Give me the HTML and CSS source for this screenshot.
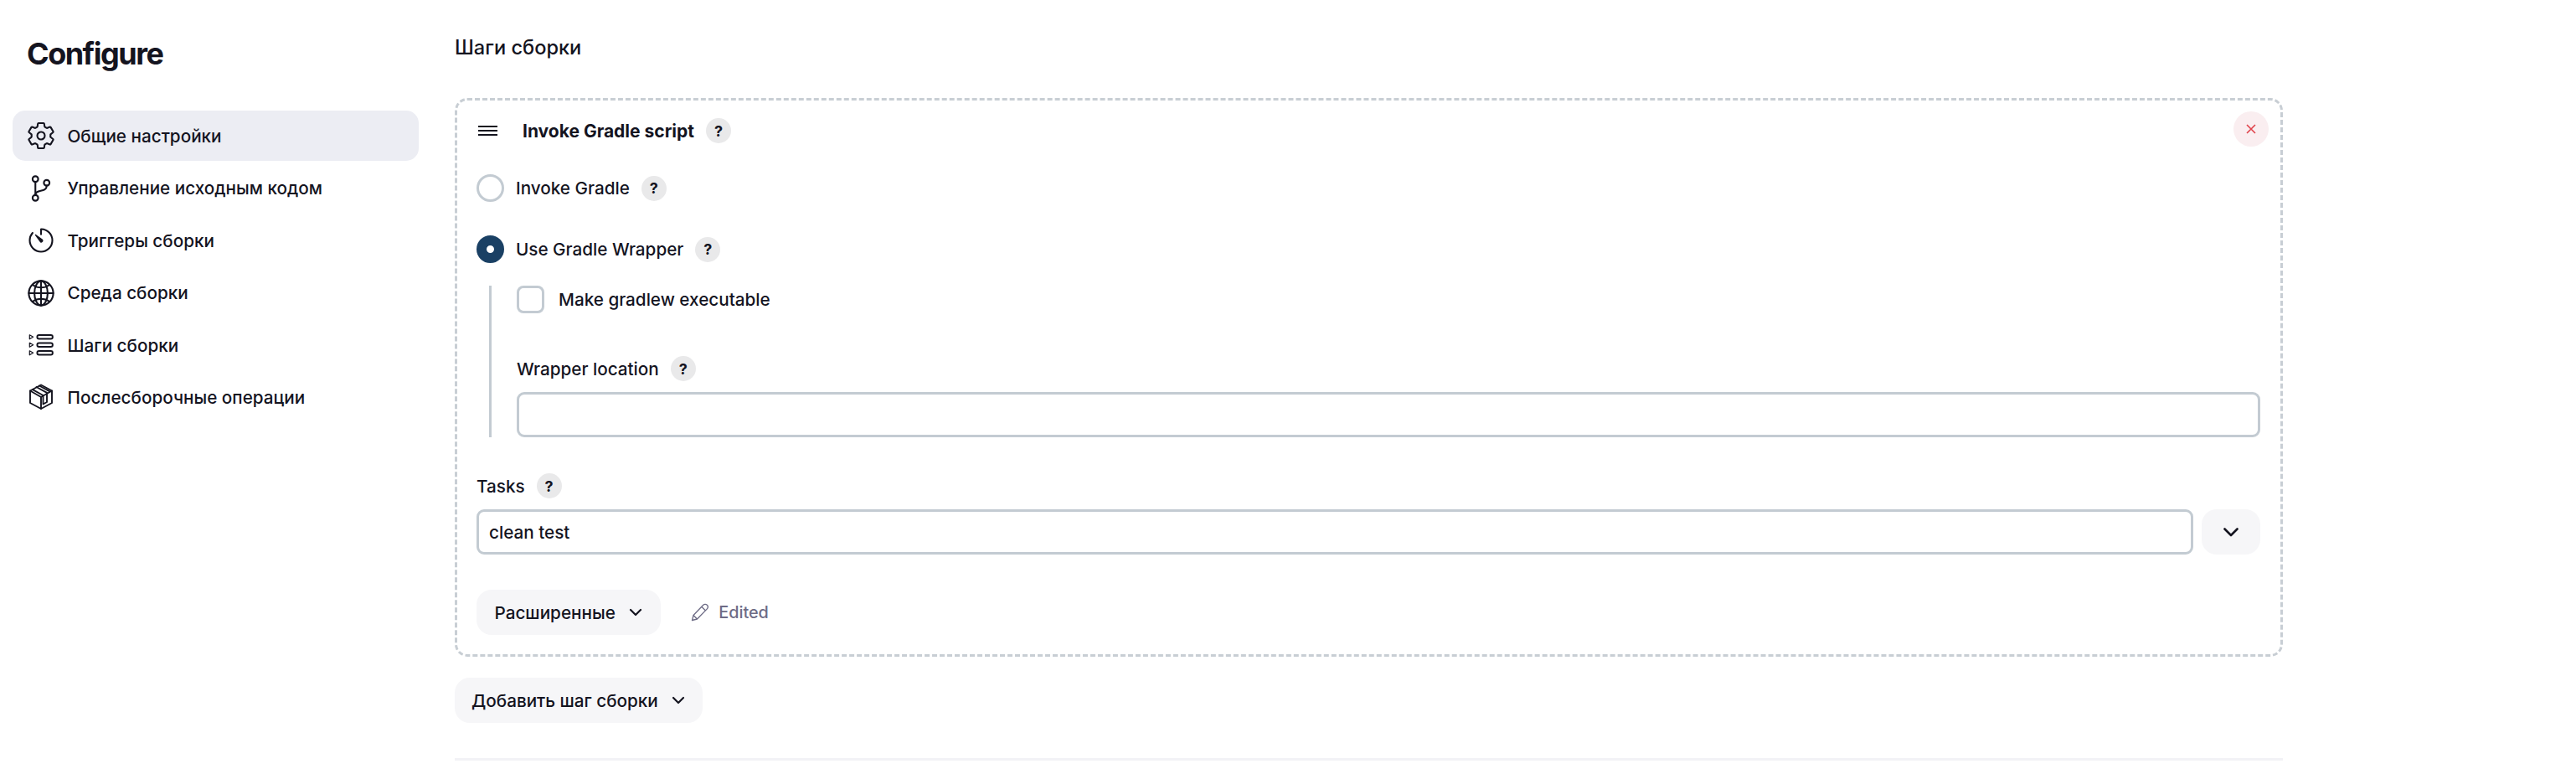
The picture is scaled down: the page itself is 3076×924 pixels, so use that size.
FILE: index.html
```html
<!DOCTYPE html>
<html lang="en">
<head>
    <meta charset="UTF-8">
    <title>Configure</title>
    <link rel="stylesheet" href="styles.css">
</head>
<body>
    <div class="page">
        <aside class="sidebar">
            <h1>Configure</h1>
            <nav class="side-nav">
                <a class="side-item active">
                    <svg class="side-icon" viewBox="0 0 512 512"><path d="M262.29 192.31a64 64 0 1057.4 57.4 64.13 64.13 0 00-57.4-57.4zM416.39 256a154.34 154.34 0 01-1.53 20.79l45.21 35.46a10.81 10.81 0 012.45 13.75l-42.77 74a10.81 10.81 0 01-13.14 4.59l-44.9-18.08a16.11 16.11 0 00-15.17 1.75A164.48 164.48 0 01325 400.8a15.94 15.94 0 00-8.82 12.14l-6.73 47.89a11.08 11.08 0 01-10.68 9.17h-85.54a11.11 11.11 0 01-10.69-8.87l-6.72-47.82a16.07 16.07 0 00-9-12.22 155.3 155.3 0 01-21.46-12.57 16 16 0 00-15.11-1.71l-44.89 18.07a10.81 10.81 0 01-13.14-4.58l-42.77-74a10.8 10.8 0 012.45-13.75l38.21-30a16.05 16.05 0 006-14.08c-.36-4.17-.58-8.33-.58-12.5s.21-8.27.58-12.35a16 16 0 00-6.07-13.94l-38.19-30A10.81 10.81 0 0149.48 186l42.77-74a10.81 10.81 0 0113.14-4.59l44.9 18.08a16.11 16.11 0 0015.17-1.75A164.48 164.48 0 01187 111.2a15.94 15.94 0 008.82-12.14l6.73-47.89A11.08 11.08 0 01213.23 42h85.54a11.11 11.11 0 0110.69 8.87l6.72 47.82a16.07 16.07 0 009 12.22 155.3 155.3 0 0121.46 12.57 16 16 0 0015.11 1.71l44.89-18.07a10.81 10.81 0 0113.14 4.58l42.77 74a10.8 10.8 0 01-2.45 13.75l-38.21 30a16.05 16.05 0 00-6.05 14.08c.33 4.14.55 8.3.55 12.47z"/></svg>
                    <span>Общие настройки</span>
                </a>
                <a class="side-item">
                    <svg class="side-icon" viewBox="0 0 512 512"><circle cx="160" cy="96" r="48"/><circle cx="160" cy="416" r="48"/><path d="M160 368V144"/><circle cx="352" cy="160" r="48"/><path d="M352 208c0 128-192 48-192 160"/></svg>
                    <span>Управление исходным кодом</span>
                </a>
                <a class="side-item">
                    <svg class="side-icon" viewBox="0 0 512 512"><path d="M112.91 128A191.85 191.85 0 0064 254c-1.18 106.35 85.65 193.8 192 194 106.2.2 192-85.83 192-192 0-104.54-83.55-189.61-187.5-192a4.36 4.36 0 00-4.5 4.37V152"/><path class="solid" d="M233.38 278.63l-79-113a8.13 8.13 0 0111.32-11.32l113 79a32.5 32.5 0 01-37.25 53.26 33.21 33.21 0 01-8.07-7.94z"/></svg>
                    <span>Триггеры сборки</span>
                </a>
                <a class="side-item">
                    <svg class="side-icon" viewBox="0 0 512 512"><path d="M256 48C141.13 48 48 141.13 48 256s93.13 208 208 208 208-93.13 208-208S370.87 48 256 48z"/><path d="M256 48c-58.07 0-112.67 93.31-112.67 208S197.93 464 256 464s112.67-93.31 112.67-208S314.07 48 256 48z"/><path d="M117.33 117.33c38.24 27.15 86.38 43.34 138.67 43.34s100.43-16.19 138.67-43.34M394.67 394.67c-38.24-27.15-86.38-43.34-138.67-43.34s-100.43 16.19-138.67 43.34"/><path d="M256 48v416M464 256H48"/></svg>
                    <span>Среда сборки</span>
                </a>
                <a class="side-item">
                    <svg class="side-icon thin" viewBox="0 0 36 36"><rect x="13.400" y="6" width="18.500" height="4.500" rx="2.250"/><rect x="13.400" y="15.500" width="18.500" height="4.500" rx="2.250"/><rect x="13.400" y="25" width="18.500" height="4.500" rx="2.250"/><path class="tick" d="M4.300 5.800l4.300 2.500-4.300 2.500zM4.300 15.300l4.300 2.500-4.300 2.500zM4.300 24.800l4.300 2.500-4.300 2.500z"/></svg>
                    <span>Шаги сборки</span>
                </a>
                <a class="side-item">
                    <svg class="side-icon thin" viewBox="0 0 36 36"><path d="M18 2.500l13 7v14.500l-13 7-13-7V9.500z"/><path d="M5 9.500L18 17l13-7.500M18 17v14"/><path d="M12.500 5L25 11.800V23l-4.500 2.500V15L8 8.200M16 3.500l12.500 6.800"/></svg>
                    <span>Послесборочные операции</span>
                </a>
            </nav>
        </aside>

        <main class="content">
            <h2 class="section-title">Шаги сборки</h2>

            <div class="step-card">
                <button class="close-btn" type="button">
                    <svg viewBox="0 0 12 12"><path d="M1 1l10 10M11 1L1 11"/></svg>
                </button>
                <div class="step-head">
                    <svg class="handle" viewBox="0 0 23 12"><path d="M0 1h23M0 6h23M0 11h23"/></svg>
                    <span class="step-title">Invoke Gradle script</span>
                    <span class="help">?</span>
                </div>

                <label class="radio-row first">
                    <span class="radio"></span>
                    <span>Invoke Gradle</span>
                    <span class="help">?</span>
                </label>
                <label class="radio-row second">
                    <span class="radio checked"></span>
                    <span>Use Gradle Wrapper</span>
                    <span class="help">?</span>
                </label>

                <div class="nested">
                    <label class="check-row">
                        <span class="checkbox"></span>
                        <span>Make gradlew executable</span>
                    </label>
                    <div class="field-label wrapper-label">
                        <span>Wrapper location</span>
                        <span class="help">?</span>
                    </div>
                    <input class="text-input" type="text">
                </div>

                <div class="field-label tasks-label">
                    <span>Tasks</span>
                    <span class="help">?</span>
                </div>
                <div class="tasks-row">
                    <input class="text-input" type="text" value="clean test">
                    <button class="plain-btn square" type="button">
                        <svg class="chevron big" viewBox="0 0 18 11"><path d="M1.500 1.500L9 9l7.500-7.500"/></svg>
                    </button>
                </div>

                <div class="adv-row">
                    <button class="plain-btn" type="button">
                        Расширенные
                        <svg class="chevron" viewBox="0 0 18 11"><path d="M3 2l6 6 6-6"/></svg>
                    </button>
                    <span class="edited">
                        <svg viewBox="0 0 22 22"><path d="M1.500 20.500l1.500-6L14.500 2.500c1.500-1.500 3.500-1.500 4.800-.2s1.300 3.300-.2 4.800L7.500 19zM3 14.500l4.500 4.500M13 4.500l4.500 4.500"/></svg>
                        Edited
                    </span>
                </div>
            </div>

            <button class="plain-btn add-step" type="button">
                Добавить шаг сборки
                <svg class="chevron" viewBox="0 0 18 11"><path d="M3 2l6 6 6-6"/></svg>
            </button>

            <div class="divider"></div>
        </main>
    </div>
</body>
</html>
```

FILE: styles.css
```css
* {
    box-sizing: border-box;
}

body {
    margin: 0;
    background-color: #fff;
    color: #14141f;
    font-family: Inter, "Noto Sans", sans-serif;
    font-size: 20.7px;
    font-weight: 450;
}

.page {
    display: flex;
    align-items: flex-start;
}

/* sidebar */
.sidebar {
    flex: none;
    width: 485px;
    margin-left: 15px;
    padding-top: 42px;
}

.sidebar h1 {
    margin: 0 0 46px 17px;
    font-size: 36px;
    line-height: 44px;
    font-weight: 700;
    letter-spacing: -1.5px;
}

.side-nav {
    display: flex;
    flex-direction: column;
    gap: 2.6px;
}

.side-item {
    display: flex;
    align-items: center;
    gap: 14px;
    height: 60px;
    padding-left: 15.5px;
    border-radius: 15px;
}

.side-item.active {
    background-color: #ecedf3;
}

.side-icon {
    flex: none;
    width: 36px;
    height: 36px;
    fill: none;
    stroke: #14141f;
    stroke-width: 30;
    stroke-linecap: round;
    stroke-linejoin: round;
}

.side-icon.thin {
    stroke-width: 1.9;
}

.side-icon .solid {
    fill: #14141f;
    stroke: none;
}

.side-icon .tick {
    stroke-width: 1.2;
}

/* main column */
.content {
    flex: none;
    width: 2183px;
    margin-left: 43px;
    padding-top: 42px;
}

.section-title {
    margin: 0 0 45px;
    font-size: 23.6px;
    line-height: 30px;
    font-weight: 500;
}

.step-card {
    position: relative;
    padding: 21px 24px 23px 23px;
    border: 3px dashed #c8ced4;
    border-radius: 15px;
}

.close-btn {
    position: absolute;
    top: 13px;
    right: 14px;
    display: flex;
    align-items: center;
    justify-content: center;
    width: 42px;
    height: 42px;
    padding: 0;
    border: none;
    border-radius: 50%;
    background-color: #faeef0;
}

.close-btn svg {
    width: 12px;
    height: 12px;
    fill: none;
    stroke: #e0434b;
    stroke-width: 1.6;
}

.step-head {
    display: flex;
    align-items: center;
    height: 30px;
}

.handle {
    width: 23px;
    height: 12px;
    margin-left: 2px;
    margin-right: 30px;
    fill: none;
    stroke: #14141f;
    stroke-width: 2;
}

.step-title {
    font-size: 21px;
    font-weight: 700;
}

.step-head .help {
    margin-left: 14px;
}

.help {
    flex: none;
    display: inline-flex;
    align-items: center;
    justify-content: center;
    width: 30px;
    height: 30px;
    border-radius: 50%;
    background-color: #e9e9ea;
    font-size: 18px;
    font-weight: 700;
}

.radio-row {
    display: flex;
    align-items: center;
    gap: 14px;
    height: 33px;
}

.radio-row.first {
    margin-top: 37px;
}

.radio-row.second {
    margin-top: 40px;
}

.radio {
    flex: none;
    width: 33px;
    height: 33px;
    border: 3px solid #c3cbd2;
    border-radius: 50%;
}

.radio.checked {
    border: 12px solid #1a4064;
    background-color: #fff;
}

.nested {
    margin: 27px 0 0 15px;
    padding-left: 30px;
    border-left: 3px solid #c3cbd2;
}

.check-row {
    display: flex;
    align-items: center;
    gap: 17px;
    height: 33px;
}

.checkbox {
    flex: none;
    width: 33px;
    height: 33px;
    border: 3px solid #c3cbd2;
    border-radius: 8px;
}

.field-label {
    display: flex;
    align-items: center;
    gap: 14px;
    height: 30px;
}

.wrapper-label {
    margin-top: 51px;
    margin-bottom: 13px;
}

.tasks-label {
    margin-top: 43px;
    margin-bottom: 13px;
}

.text-input {
    display: block;
    width: 100%;
    height: 54px;
    padding: 0 12px;
    border: 3px solid #c3cbd2;
    border-radius: 9px;
    background-color: #fff;
    color: #14141f;
    font: inherit;
}

.tasks-row {
    display: flex;
    gap: 10px;
}

.tasks-row .text-input {
    flex: 1;
    width: auto;
}

.plain-btn {
    display: inline-flex;
    align-items: center;
    gap: 15px;
    height: 54px;
    padding: 0 21.5px;
    border: none;
    border-radius: 18px;
    background-color: #f6f6f8;
    color: #14141f;
    font: inherit;
}

.plain-btn.square {
    flex: none;
    justify-content: center;
    width: 70px;
    padding: 0;
}

.chevron {
    flex: none;
    width: 18px;
    height: 11px;
    fill: none;
    stroke: #14141f;
    stroke-width: 2.2;
    stroke-linecap: round;
    stroke-linejoin: round;
}

.chevron.big {
    stroke-width: 2.6;
}

.adv-row {
    display: flex;
    align-items: center;
    gap: 36px;
    margin-top: 42px;
}

.edited {
    display: inline-flex;
    align-items: center;
    gap: 11px;
    color: #6d6b85;
    font-size: 19.8px;
    font-weight: 500;
}

.edited svg {
    width: 22px;
    height: 22px;
    fill: none;
    stroke: #6d6b85;
    stroke-width: 1.3;
    stroke-linejoin: round;
}

.add-step {
    margin-top: 25px;
    padding: 0 20px;
}

.divider {
    height: 3px;
    margin-top: 42px;
    background-color: #f2f2f6;
}
```
